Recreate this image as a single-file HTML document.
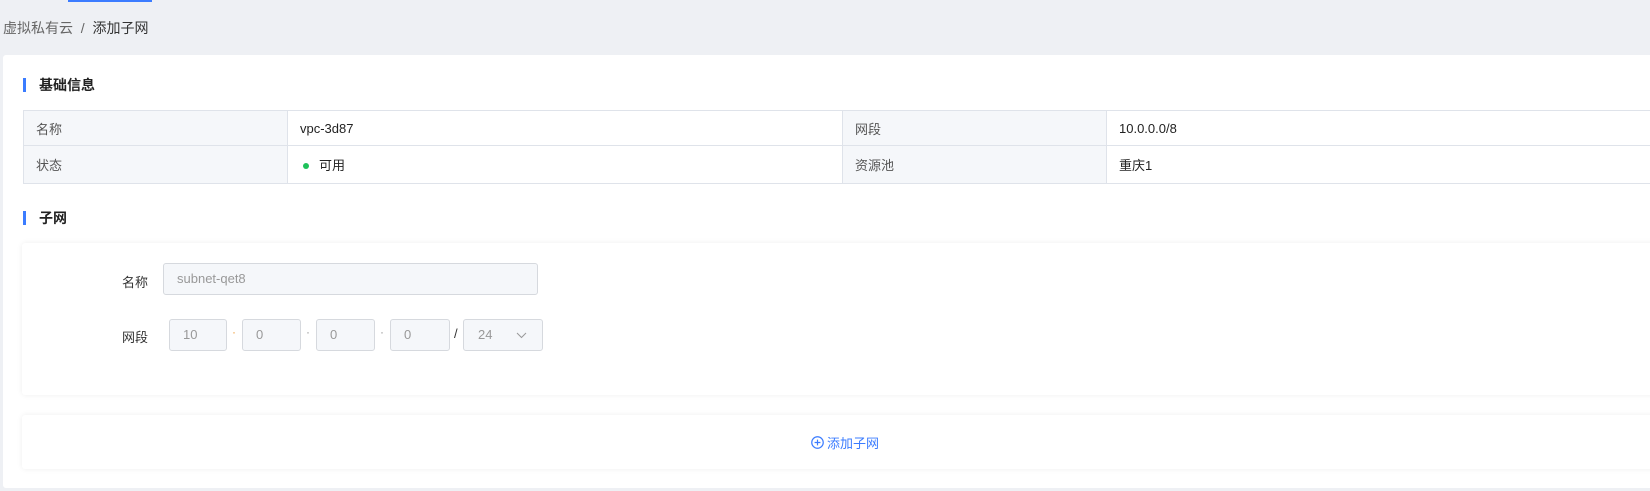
<!DOCTYPE html>
<html><head><meta charset="utf-8"><style>
*{margin:0;padding:0;box-sizing:border-box}
body{width:1650px;height:491px;background:#eef0f4;font-family:"Liberation Sans","Noto Sans CJK SC",sans-serif;font-size:13px;color:#333;position:relative;overflow:hidden}
.abs{position:absolute}
.topline{left:68px;top:0;width:84px;height:2px;background:#3b7cff}
.bc{left:3px;top:18px;font-size:14px;color:#666}
.bc b{font-weight:normal;color:#333}
.card{left:3px;top:55px;width:1660px;height:433px;background:#fff;border-radius:3px}
.bar{width:3px;height:14px;background:#3b7cff}
.title{font-size:14px;font-weight:bold;color:#222}
table{position:absolute;left:23px;top:110px;border-collapse:collapse;width:1640px}
td{border:1px solid #dfe3ea;padding:0 12px;font-size:13px;color:#222}
td.l{background:#f5f7fa;color:#555}
.sub{left:22px;top:243px;width:1640px;height:152px;background:#fff;box-shadow:0 0 6px rgba(0,0,0,.07);border-radius:3px}
.add{left:22px;top:415px;width:1640px;height:54px;background:#fff;box-shadow:0 0 6px rgba(0,0,0,.07);border-radius:3px}
.inp{position:absolute;background:#f5f7fa;border:1px solid #d6d9de;border-radius:3px;height:32px;color:#999;font-size:13px;line-height:30px;padding-left:13px}
.lab{position:absolute;font-size:13px;color:#333}
.dot{position:absolute;color:#999;font-size:12px}
</style></head><body>
<div class="abs topline"></div>
<div class="abs bc">虚拟私有云 &nbsp;/&nbsp; <b>添加子网</b></div>
<div class="abs card"></div>
<div class="abs bar" style="left:23px;top:78px"></div>
<div class="abs title" style="left:39px;top:75px">基础信息</div>
<table><tr style="height:35px"><td class="l" style="width:264px">名称</td><td style="width:555px">vpc-3d87</td><td class="l" style="width:264px">网段</td><td>10.0.0.0/8</td></tr>
<tr style="height:38px"><td class="l">状态</td><td><span style="display:inline-block;width:6px;height:6px;border-radius:50%;background:#1ec15a;margin:0 10px 2px 3px;vertical-align:middle"></span>可用</td><td class="l">资源池</td><td>重庆1</td></tr></table>
<div class="abs bar" style="left:23px;top:211px"></div>
<div class="abs title" style="left:39px;top:208px">子网</div>
<div class="abs sub"></div>
<div class="lab" style="left:122px;top:272px">名称</div>
<div class="inp" style="left:163px;top:263px;width:375px">subnet-qet8</div>
<div class="lab" style="left:122px;top:327px">网段</div>
<div class="inp" style="left:169px;top:319px;width:58px">10</div>
<div class="dot" style="left:232px;top:325px;color:#f0a040">·</div>
<div class="inp" style="left:242px;top:319px;width:59px">0</div>
<div class="dot" style="left:306px;top:325px">·</div>
<div class="inp" style="left:316px;top:319px;width:59px">0</div>
<div class="dot" style="left:380px;top:325px">·</div>
<div class="inp" style="left:390px;top:319px;width:60px">0</div>
<div class="lab" style="left:454px;top:326px">/</div>
<div class="inp" style="left:463px;top:319px;width:80px;padding-left:14px">24<svg style="position:absolute;right:15px;top:12px" width="11" height="7" viewBox="0 0 11 7"><path d="M1 1l4.5 4.5L10 1" fill="none" stroke="#999" stroke-width="1"/></svg></div>
<div class="abs add"></div>
<div class="abs" style="left:811px;top:433px;color:#3b7cff;font-size:13px;display:flex;align-items:center"><svg width="13" height="13" viewBox="0 0 12 12" style="margin-right:3px"><circle cx="6" cy="6" r="5.3" fill="none" stroke="#3b7cff" stroke-width="1.1"/><path d="M6 3.3v5.4M3.3 6h5.4" stroke="#3b7cff" stroke-width="1.1"/></svg>添加子网</div>
</body></html>
